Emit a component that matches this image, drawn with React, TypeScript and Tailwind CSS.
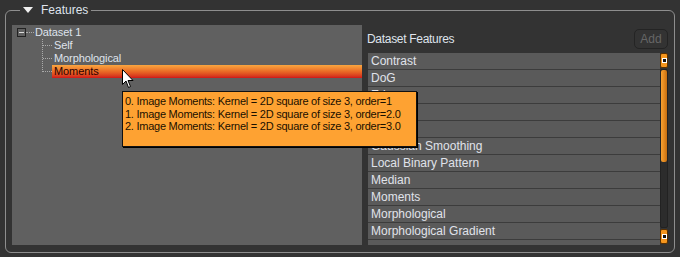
import React from 'react'

const features = [
  'Contrast',
  'DoG',
  'Edges',
  'Entropy',
  'Gabor',
  'Gaussian Smoothing',
  'Local Binary Pattern',
  'Median',
  'Moments',
  'Morphological',
  'Morphological Gradient',
  '',
]

const tips = [
  '0. Image Moments: Kernel = 2D square of size 3, order=1',
  '1. Image Moments: Kernel = 2D square of size 3, order=2.0',
  '2. Image Moments: Kernel = 2D square of size 3, order=3.0',
]

function Cursor() {
  return (
    <svg width="12" height="20" viewBox="0 0 12 20" className="absolute left-[122px] top-[69px]">
      <path d="M0.5 0.5 L0.5 15.5 L4 12 L6.5 18.5 L8.5 17.5 L6 11.5 L11 11.5 Z" fill="#fff" stroke="#000" strokeWidth="1" />
    </svg>
  )
}

function TreePanel() {
  return (
    <div className="relative w-[350px] bg-[#606060] text-[11px] leading-[13px] text-[#dfe3ec] tracking-[-0.1px]">
      <div className="flex items-center h-[13px] pl-[5px] mt-[1px]">
        <div className="w-[9px] h-[9px] border border-[#222] flex items-center justify-center">
          <div className="w-[5px] h-px bg-[#ddd]" />
        </div>
        <div className="w-[8px] border-t border-dotted border-[#aaa]" />
        <span className="ml-[1px]">Dataset 1</span>
      </div>
      <div className="flex">
        <div className="ml-[30px] w-px border-l border-dotted border-[#aaa] h-[33px]" />
        <div className="flex flex-col flex-1">
          {['Self', 'Morphological', 'Moments'].map((n) => (
            <div key={n} className="flex items-center h-[13px]">
              <div className="w-[9px] border-t border-dotted border-[#aaa]" />
              {n === 'Moments' ? (
                <span className="flex-1 pl-[2px] h-[13px] bg-gradient-to-b from-[#f9a640] via-[#ea6a26] to-[#d0141a] text-[#2a0000]">
                  {n}
                </span>
              ) : (
                <span className="pl-[2px]">{n}</span>
              )}
            </div>
          ))}
        </div>
      </div>
    </div>
  )
}

function FeatureList() {
  return (
    <div className="flex h-[192px] ml-[1px]">
      <div className="flex-1 overflow-hidden bg-[#5a5a5a]">
        {features.map((f, i) => (
          <div key={i} className="h-[17px] border-b border-[#3c3c3c] pl-[3px] text-[12px] leading-[17px] text-[#e0e3ea] whitespace-nowrap">
            {f}
          </div>
        ))}
      </div>
      <div className="w-[8px] flex flex-col gap-px bg-[#333] h-[191px]">
        <div className="h-[15px] rounded-[2px] bg-[#f5961e] border border-[#5a3000] flex items-center justify-center">
          <div className="w-[3px] h-[3px] bg-[#111] outline outline-1 outline-[#fff]" />
        </div>
        <div className="flex-1 rounded-[2px] bg-[#2c2c2c] border border-[#222] flex flex-col">
          <div className="h-[92px] rounded-[2px] bg-gradient-to-r from-[#f7a030] via-[#e48a20] to-[#c56e10]" />
        </div>
        <div className="h-[15px] rounded-[2px] bg-[#f5961e] border border-[#5a3000] flex items-center justify-center">
          <div className="w-[3px] h-[3px] bg-[#111] outline outline-1 outline-[#fff]" />
        </div>
      </div>
    </div>
  )
}

export default function App() {
  return (
    <div
      className="relative w-[680px] h-[257px] bg-[#333333] overflow-hidden"
      style={{ fontFamily: '"Liberation Sans", Arial, sans-serif' }}
    >
      <fieldset className="mx-[5px] h-[253px] border border-[#8e8e8e] rounded-[6px] pl-[6px] pr-[5px] pb-[6px] pt-0 min-w-0">
        <legend className="ml-[8px] px-[3px] flex items-center gap-[8px] h-[20px] text-[12px] text-[#dfe3ec]">
          <svg width="10" height="6" viewBox="0 0 10 6">
            <path d="M0 0 L10 0 L5 6 Z" fill="#f0f0f0" />
          </svg>
          <span>Features</span>
        </legend>
        <div className="flex gap-[5px] h-[220px] mt-[5px]">
          <TreePanel />
          <div className="flex flex-col w-[301px]">
            <div className="flex items-center justify-between h-[28px]">
              <span className="text-[12px] text-[#dfe3ec] tracking-[-0.3px]">Dataset Features</span>
              <button className="h-[20px] w-[34px] rounded-[5px] border border-[#242424] bg-[#333] text-[12px] text-[#666]">
                Add
              </button>
            </div>
            <FeatureList />
          </div>
        </div>
      </fieldset>
      <Cursor />
      <div className="absolute left-[122px] top-[91px] w-[295px] h-[56px] bg-[#fea232] border border-[#111] shadow-[1px_1px_0_#000] pl-[2px] pt-[3px] text-[11px] leading-[12.5px] tracking-[-0.25px] text-[#1a1000] whitespace-nowrap">
        {tips.map((t) => (
          <div key={t}>{t}</div>
        ))}
      </div>
    </div>
  )
}
